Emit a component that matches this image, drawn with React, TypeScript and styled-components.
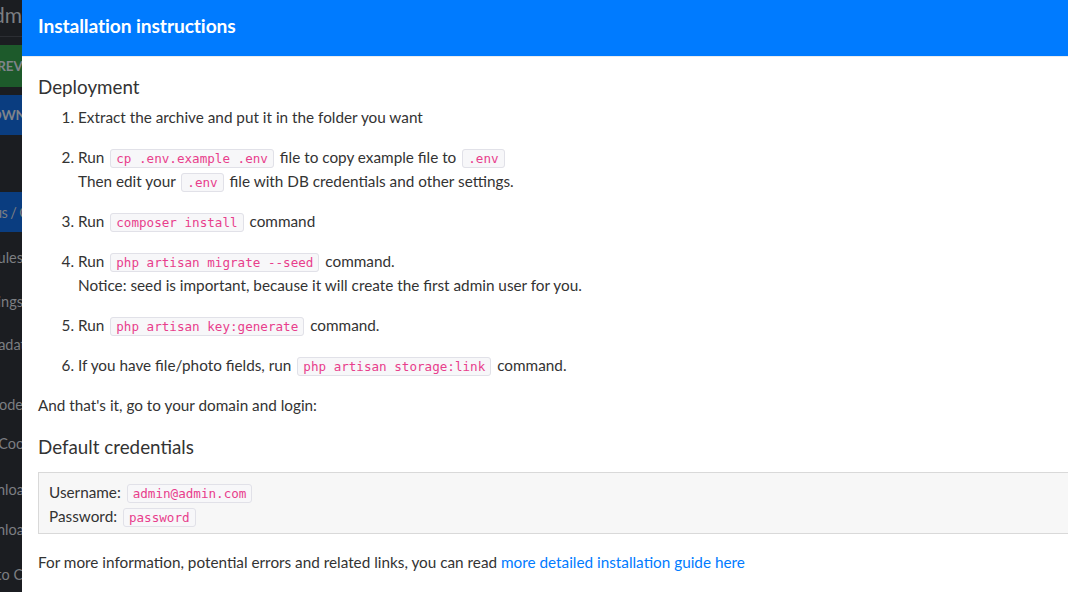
import React from "react";
import styled, { createGlobalStyle } from "styled-components";

const Global = createGlobalStyle`
  html, body { margin: 0; padding: 0; background: #ffffff; }
  body { font-family: Lato, "Liberation Sans", sans-serif; overflow: hidden; }
  * { box-sizing: border-box; }
`;

const Page = styled.div`
  display: flex;
  width: 1068px;
  height: 592px;
  overflow: hidden;
`;

const Sidebar = styled.aside`
  width: 22px;
  flex: 0 0 22px;
  background: #1b1d21;
  overflow: hidden;
  display: flex;
  justify-content: flex-end;
`;

const SideInner = styled.div`
  flex: 0 0 200px;
  display: flex;
  flex-direction: column;
  font-family: Lato, "Liberation Sans", sans-serif;
  color: #7c7e82;
  font-size: 14.5px;
`;

const Brand = styled.div`
  height: 37px;
  line-height: 30px;
  font-size: 21px;
  text-align: right;
  border-bottom: 1px solid #2c2e33;
  white-space: nowrap;
`;

const SideButton = styled.div<{ $bg: string; $mt: number; $h: number; $shift: number }>`
  margin-top: ${(p) => p.$mt}px;
  height: ${(p) => p.$h}px;
  background: ${(p) => p.$bg};
  font-weight: 700;
  font-size: 13.5px;
  display: flex;
  align-items: center;
  justify-content: flex-end;
  margin-right: ${(p) => -p.$shift}px;
  color: #80848a;
  white-space: nowrap;
`;

const SideItem = styled.div<{ $active?: boolean; $mt: number; $h?: number; $shift?: number }>`
  margin-top: ${(p) => p.$mt}px;
  height: ${(p) => p.$h ?? 24}px;
  background: ${(p) => (p.$active ? "#0a3d80" : "transparent")};
  display: flex;
  align-items: center;
  justify-content: flex-end;
  white-space: nowrap;
  letter-spacing: ${(p) => (p.$active ? "-0.6px" : "0")};
  margin-right: ${(p) => -(p.$shift ?? 0)}px;
`;

const Modal = styled.section`
  flex: 0 0 1100px;
  display: flex;
  flex-direction: column;
  background: #ffffff;
  color: #333333;
`;

const Header = styled.header`
  flex: 0 0 57px;
  background: #007bff;
  border-bottom: 1px solid #e9ecef;
  padding: 14px 16px;
`;

const Title = styled.h2`
  margin: 0;
  color: #ffffff;
  font-size: 19.2px;
  font-weight: 700;
  line-height: 24px;
  letter-spacing: -0.1px;
`;

const Body = styled.div`
  flex: 0 0 auto;
  padding: 16px;
  font-size: 15.3px;
  line-height: 24px;
  color: #333333;
`;

const Heading = styled.h4<{ $mb: number }>`
  margin: 0 0 ${(p) => p.$mb}px;
  font-size: 18.8px;
  font-weight: 400;
  line-height: 28px;
  color: #333333;
`;

const Steps = styled.ol`
  margin: 0;
  padding-left: 40px;
`;

const Step = styled.li`
  margin-bottom: 16px;
`;

const Para = styled.p<{ $mb?: number }>`
  margin: 0 0 ${(p) => p.$mb ?? 16}px;
`;

const Code = styled.code`
  font-family: "DejaVu Sans Mono", "Liberation Mono", monospace;
  font-size: 12.6px;
  line-height: 1;
  color: #e83e8c;
  background: #f7f7f9;
  border: 1px solid #e1e1e8;
  border-radius: 3px;
  padding: 1px 5px;
  margin: 0 2px;
`;

const CredBox = styled.div`
  background: #f7f7f7;
  border: 1px solid #d9d9d9;
  border-right: none;
  padding: 7px 10px 5px;
  line-height: 24px;
  margin-bottom: 16px;
`;

const Link = styled.a`
  color: #007bff;
  text-decoration: none;
`;

export default function App() {
  return (
    <>
      <Global />
      <Page>
        <Sidebar>
          <SideInner>
            <Brand>Adm</Brand>
            <SideButton $bg="#1d5a2b" $mt={8} $h={42} $shift={1}>PREV</SideButton>
            <SideButton $bg="#0a3d80" $mt={8} $h={40} $shift={4}>DOWN</SideButton>
            <SideItem $active $mt={57} $h={40} $shift={26}>Menus / Crud</SideItem>
            <SideItem $mt={13} $shift={1}>Modules</SideItem>
            <SideItem $mt={20} $shift={1}>Settings</SideItem>
            <SideItem $mt={19} $shift={11}>Metadata</SideItem>
            <SideItem $mt={36} $shift={1}>Code</SideItem>
            <SideItem $mt={15} $shift={27}>Edit Cookies</SideItem>
            <SideItem $mt={22} $shift={10}>Download</SideItem>
            <SideItem $mt={16} $shift={10}>Download</SideItem>
            <SideItem $mt={21} $shift={25}>Go to Code</SideItem>
          </SideInner>
        </Sidebar>
        <Modal>
          <Header>
            <Title>Installation instructions</Title>
          </Header>
          <Body>
            <Heading $mb={4}>Deployment</Heading>
            <Steps>
              <Step>Extract the archive and put it in the folder you want</Step>
              <Step>
                Run <Code>cp .env.example .env</Code> file to copy example file to <Code>.env</Code>
                <br />
                Then edit your <Code>.env</Code> file with DB credentials and other settings.
              </Step>
              <Step>
                Run <Code>composer install</Code> command
              </Step>
              <Step>
                Run <Code>php artisan migrate --seed</Code> command.
                <br />
                Notice: seed is important, because it will create the first admin user for you.
              </Step>
              <Step>
                Run <Code>php artisan key:generate</Code> command.
              </Step>
              <Step>
                If you have file/photo fields, run <Code>php artisan storage:link</Code> command.
              </Step>
            </Steps>
            <Para>And that's it, go to your domain and login:</Para>
            <Heading $mb={11}>Default credentials</Heading>
            <CredBox>
              Username: <Code>admin@admin.com</Code>
              <br />
              Password: <Code>password</Code>
            </CredBox>
            <Para>
              For more information, potential errors and related links, you can read{" "}
              <Link href="#">more detailed installation guide here</Link>
            </Para>
          </Body>
        </Modal>
      </Page>
    </>
  );
}
